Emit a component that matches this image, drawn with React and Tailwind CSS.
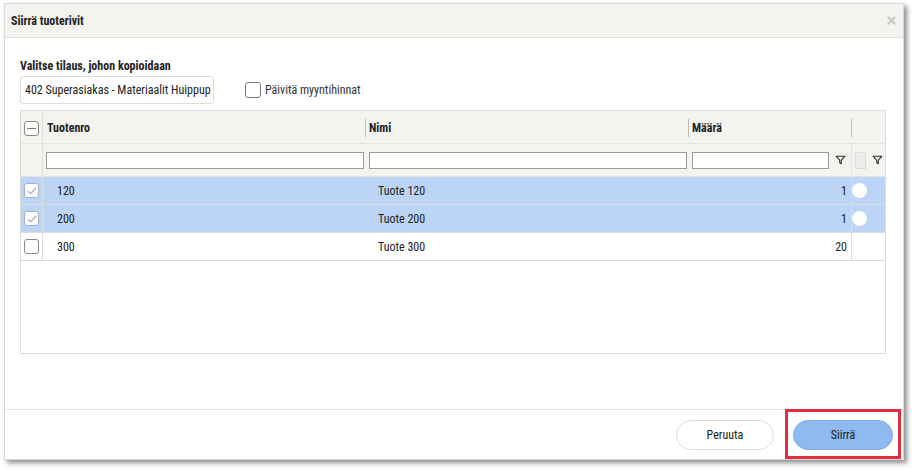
import React from 'react';

const font = { fontFamily: "'Liberation Sans Narrow', 'Roboto Condensed', Roboto, sans-serif" };

const Funnel = () => (
  <svg width="11" height="10" viewBox="0 0 11 10" fill="none" stroke="#333" strokeWidth="1.1">
    <path d="M1 1.2h9L6.3 5.2v3.6L4.7 7.8V5.2z" strokeLinejoin="round" />
  </svg>
);

const Check = ({ state }) => (
  <div
    className={`flex h-[15px] w-[15px] items-center justify-center rounded-[3px] border bg-white ${
      state === 'checked' ? 'border-[#9db3d6]' : 'border-[#8a8a8a]'
    }`}
  >
    {state === 'checked' && (
      <svg width="10" height="8" viewBox="0 0 10 8" fill="none" stroke="#a8a3d6" strokeWidth="1.2">
        <path d="M1 4.2l2.6 2.5L9 1" />
      </svg>
    )}
    {state === 'partial' && <div className="h-px w-[9px] bg-[#777]" />}
  </div>
);

const rows = [
  { no: '120', name: 'Tuote 120', qty: '1', selected: true },
  { no: '200', name: 'Tuote 200', qty: '1', selected: true },
  { no: '300', name: 'Tuote 300', qty: '20', selected: false },
];

const cols = 'grid grid-cols-[22px_323px_323px_163px_35px]';

export default function App() {
  return (
    <div className="h-[470px] w-[912px] bg-white pl-[4px] pt-[3px] text-[#222]" style={font}>
      <div className="relative flex h-[457px] w-[900px] flex-col border border-[#d8d8d8] bg-white shadow-[3px_3px_5px_rgba(0,0,0,0.45)]">
        <div className="flex h-[34px] items-center justify-between border-b border-[#e4e1dc] bg-[#f5f3f0] pl-[6px] pr-[7px]">
          <span className="text-[12px] font-bold">Siirrä tuoterivit</span>
          <svg width="9" height="9" viewBox="0 0 9 9" stroke="#c6c6c6" strokeWidth="2.2" strokeLinecap="round">
            <path d="M1.5 1.5l6 6M7.5 1.5l-6 6" />
          </svg>
        </div>

        <div className="flex-1 px-[15px] pt-[20px]">
          <div className="text-[12px] font-bold leading-[16px]">Valitse tilaus, johon kopioidaan</div>
          <div className="mt-[2px] flex items-center">
            <div className="flex h-[28px] w-[194px] items-center overflow-hidden whitespace-nowrap rounded-[3px] border border-[#dcdcdc] pl-[4px] text-[12px]">
              402 Superasiakas - Materiaalit Huippup
            </div>
            <div className="ml-[31px] flex items-center gap-[4px] text-[12px] text-[#333]">
              <div className="h-[16px] w-[16px] rounded-[3px] border border-[#777]" />
              Päivitä myyntihinnat
            </div>
          </div>

          <div className="mt-[6px] h-[244px] w-[866px] border border-[#dedcd8]">
            <div className={`${cols} h-[33px] border-b border-[#e6e3de] bg-[#f5f3f0] text-[12px] font-bold`}>
              <div className="flex items-center justify-center border-r border-[#e0ddd8]">
                <Check state="partial" />
              </div>
              <div className="flex items-center pl-[4px]">Tuotenro</div>
              <div className="my-[8px] -ml-px flex items-center border-l border-[#bbb] pl-[3px]">Nimi</div>
              <div className="my-[8px] -ml-px flex items-center border-l border-[#bbb] pl-[3px]">Määrä</div>
              <div className="my-[8px] -ml-px border-l border-[#bbb]" />
            </div>
            <div className={`${cols} h-[33px] border-b border-[#e6e3de] bg-[#f5f3f0]`}>
              <div className="border-r border-[#e0ddd8]" />
              <div className="flex items-center pl-[3px] pr-[2px]">
                <div className="h-[17px] w-full border border-[#9a9a9a] bg-white" />
              </div>
              <div className="flex items-center pl-[3px] pr-[2px]">
                <div className="h-[17px] w-full border border-[#9a9a9a] bg-white" />
              </div>
              <div className="flex items-center pl-[3px]">
                <div className="h-[17px] w-[137px] border border-[#9a9a9a] bg-white" />
                <div className="ml-[6px]"><Funnel /></div>
              </div>
              <div className="-ml-px flex items-center border-l border-[#e6e3de] pl-[3px]">
                <div className="h-[17px] w-[11px] border border-[#dcdcdc] bg-[#ececec]" />
                <div className="ml-[6px]"><Funnel /></div>
              </div>
            </div>
            {rows.map((r) => (
              <div
                key={r.no}
                className={`${cols} h-[28px] border-b border-[#dedcd8] text-[12px] ${r.selected ? 'bg-[#bcd4f6]' : 'bg-white'}`}
              >
                <div className="flex items-center justify-center border-r border-[#dedcd8]">
                  <Check state={r.selected ? 'checked' : 'none'} />
                </div>
                <div className="flex items-center pl-[14px]">{r.no}</div>
                <div className="flex items-center pl-[12px]">{r.name}</div>
                <div className="flex items-center justify-end pr-[5px]">{r.qty}</div>
                <div className="relative -ml-px border-l border-[#d4dde8]">
                  {r.selected && (
                    <div className="absolute left-[0px] top-[6px] h-[15px] w-[15px] rounded-full bg-white" />
                  )}
                </div>
              </div>
            ))}
          </div>
        </div>

        <div className="flex h-[50px] items-center justify-end gap-[19px] border-t border-[#e2e2e2] pr-[10px]">
          <button className="h-[30px] w-[98px] rounded-full border border-[#dcdcdc] bg-white text-[12px] text-[#222]">
            Peruuta
          </button>
          <button className="h-[30px] w-[100px] rounded-full border border-[#7ea8e4] bg-[#8fb9f1] text-[12px] text-[#222]">
            Siirrä
          </button>
          <div className="pointer-events-none absolute bottom-[0px] right-[2px] h-[50px] w-[116px] border-[3px] border-[#e0303e]" />
        </div>
      </div>
    </div>
  );
}
